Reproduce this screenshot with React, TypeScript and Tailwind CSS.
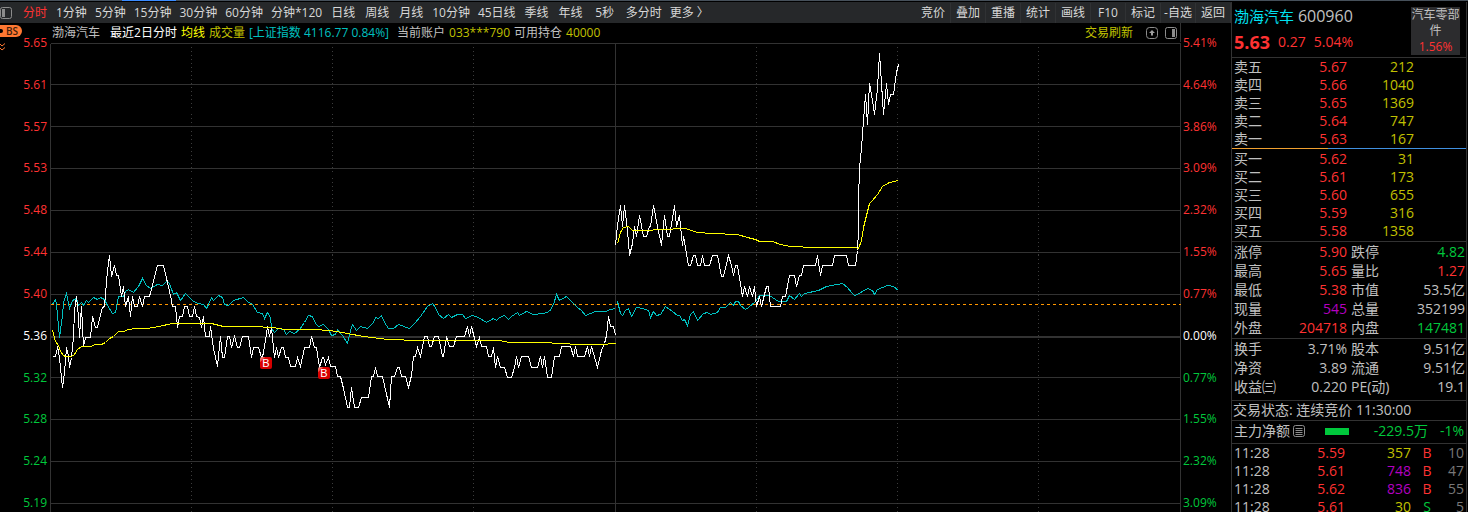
import { clsx } from "clsx";

const RED = "text-[#ff3232]";
const GREEN = "text-[#00c83c]";
const YELLOW = "text-[#c0c000]";
const PURPLE = "text-[#b400c0]";
const SILVER = "text-[#c0c0c0]";

const periods = [
  "分时", "1分钟", "5分钟", "15分钟", "30分钟", "60分钟", "分钟*120", "日线", "周线",
  "月线", "10分钟", "45日线", "季线", "年线", "5秒", "多分时", "更多 〉",
];

const actions = ["竞价", "叠加", "重播", "统计", "画线", "F10", "标记", "-自选", "返回"];

const prices = [
  "5.65", "5.61", "5.57", "5.53", "5.48", "5.44", "5.40", "5.36", "5.32", "5.28", "5.24", "5.19",
];

const percents = [
  "5.41%", "4.64%", "3.86%", "3.09%", "2.32%", "1.55%", "0.77%", "0.00%", "0.77%", "1.55%", "2.32%", "3.09%",
];

const sells = [
  ["卖五", "5.67", "212"],
  ["卖四", "5.66", "1040"],
  ["卖三", "5.65", "1369"],
  ["卖二", "5.64", "747"],
  ["卖一", "5.63", "167"],
];

const buys = [
  ["买一", "5.62", "31"],
  ["买二", "5.61", "173"],
  ["买三", "5.60", "655"],
  ["买四", "5.59", "316"],
  ["买五", "5.58", "1358"],
];

const quoteStats = [
  ["涨停", "5.90", RED, "跌停", "4.82", GREEN],
  ["最高", "5.65", RED, "量比", "1.27", RED],
  ["最低", "5.38", RED, "市值", "53.5亿", SILVER],
  ["现量", "545", PURPLE, "总量", "352199", SILVER],
  ["外盘", "204718", RED, "内盘", "147481", GREEN],
];

const companyStats = [
  ["换手", "3.71%", SILVER, "股本", "9.51亿", SILVER],
  ["净资", "3.89", SILVER, "流通", "9.51亿", SILVER],
  ["收益㈢", "0.220", SILVER, "PE(动)", "19.1", SILVER],
];

const ticks = [
  { time: "11:28", price: "5.59", volume: "357", color: YELLOW, side: "B", count: "10" },
  { time: "11:28", price: "5.61", volume: "748", color: PURPLE, side: "B", count: "47" },
  { time: "11:28", price: "5.62", volume: "836", color: PURPLE, side: "B", count: "55" },
  { time: "11:28", price: "5.61", volume: "30", color: YELLOW, side: "S", count: "5" },
];

// chart space: x 50..1181, y 42..512
const CHART = { x: 50, y: 42, w: 1131, h: 470 };
const gridY = [43, 84, 126, 168, 210, 252, 294, 377, 419, 461, 503];
const gridX = [191, 332, 473, 756, 897, 1038];

const priceDay1 =
  "52,356 55,356 57,347 58,350 60,367 62,387 64,372 66,347 68,355 69,367 71,357 73,337 74,310 76,296 78,317 79,337 80,320 81,306 83,346 85,337 90,337 92,316 95,327 97,327 102,307 104,306 107,270 109,255 111,276 114,265 116,275 118,275 121,296 123,286 125,306 128,296 130,316 132,296 134,306 137,306 139,296 142,306 144,296 149,296 157,265 163,265 167,282 171,300 172,306 175,306 177,327 179,316 182,316 184,306 187,306 189,316 192,316 194,306 196,316 199,317 201,327 203,316 205,336 209,336 210,326 213,348 215,357 217,366 220,336 222,357 224,357 227,336 229,336 231,347 234,336 237,347 239,347 242,336 248,336 251,357 253,347 258,347 261,357 262,357 265,340 267,326 269,336 271,327 274,357 276,347 278,357 281,347 283,347 285,357 288,357 290,366 295,366 297,357 300,366 304,347 309,347 311,336 314,347 316,347 319,367 322,357 323,357 325,364 328,357 330,366 335,366 337,376 340,376 343,388 347,407 349,407 351,387 354,407 358,407 361,397 368,397 371,376 373,376 375,367 377,376 382,376 389,407 391,376 394,376 397,367 399,367 401,376 405,376 408,387 411,375 413,356 415,356 417,347 420,356 424,336 427,336 429,346 431,346 434,336 438,336 442,356 443,356 446,336 449,346 453,346 456,336 464,336 467,326 469,336 471,326 476,346 479,337 481,346 486,346 488,356 491,356 493,347 495,367 497,356 500,367 504,367 507,377 511,377 514,367 516,356 518,367 521,356 528,356 531,367 537,367 540,356 542,367 544,356 547,377 551,377 554,356 559,356 561,346 570,346 573,356 575,346 577,356 584,356 587,346 589,356 591,346 597,367 601,350 604,343 606,335 608,316 610,326 613,326 615,335";

const priceDay2 =
  "615,245 617,225 620,205 622,226 624,205 627,230 629,255 632,243 634,226 636,236 639,215 643,236 646,236 649,226 650,226 653,205 657,226 661,245 664,215 667,236 669,236 674,205 676,226 679,215 682,245 683,236 688,265 690,265 693,255 695,255 697,265 700,265 702,255 704,265 709,265 712,255 717,255 721,276 723,276 728,255 731,265 733,275 735,265 737,265 742,296 744,286 747,296 749,286 752,296 754,286 756,306 759,296 761,306 766,286 768,286 770,306 780,306 782,296 785,296 789,275 794,275 796,286 799,275 801,275 803,265 815,265 817,255 820,275 822,265 832,265 834,255 846,255 848,265 855,265 857,250 858,230 858,200 859,168 861,148 863,120 865,94 867,124 869,83 872,100 874,114 877,88 879,53 881,83 883,114 886,83 888,104 890,94 893,94 896,72 898,64";

const averageDay1 =
  "52,330 55,341 58,345 60,351 63,355 65,356 71,356 74,354 77,349 81,346 90,346 95,344 101,344 105,342 109,338 113,336 118,331 123,331 128,329 135,328 147,328 158,326 172,323 211,323 223,326 252,326 272,327 285,329 312,329 330,330 347,333 363,336 387,339 420,340 499,340 509,342 542,342 579,344 607,344 608,343 615,343";

const averageDay2 =
  "617,243 620,232 623,227 628,226 632,230 652,230 653,229 672,229 673,228 685,228 697,232 712,233 737,234 747,237 755,239 759,241 772,241 780,244 790,246 815,247 855,247 858,248 861,240 863,227 867,211 869,203 872,200 877,194 882,186 889,182 898,180";

const indexDay1 =
  "52,304 55,299 56,303 57,315 59,337 62,315 63,302 66,293 69,308 72,300 76,298 78,305 81,302 83,305 86,300 88,302 93,297 97,299 100,297 104,299 107,305 112,313 115,312 118,296 123,296 125,291 128,289 133,292 138,286 142,278 146,285 150,288 157,284 162,285 166,281 169,283 173,294 176,292 180,300 185,293 192,300 197,303 203,304 206,308 208,304 211,297 213,300 218,295 222,297 224,304 228,305 233,300 243,297 247,301 252,304 257,312 262,313 264,318 267,312 270,317 271,328 274,332 278,328 283,329 286,334 289,331 294,333 299,329 304,322 308,315 312,316 315,323 318,326 323,324 328,329 331,335 335,334 337,329 342,335 347,343 350,330 352,324 356,330 360,326 367,328 373,322 375,317 378,318 381,315 384,322 388,328 393,328 398,324 409,328 414,323 420,316 427,306 432,303 435,307 438,314 443,318 448,314 451,317 457,314 462,314 465,318 472,315 478,317 486,322 493,318 496,320 499,317 504,315 508,319 511,316 517,312 519,315 526,311 533,314 543,313 549,311 553,304 556,294 559,300 566,296 570,300 574,304 577,307 581,310 585,315 595,311 605,311 610,309 615,308";

const indexDay2 =
  "617,301 620,313 622,315 625,310 628,308 631,316 636,307 642,308 648,310 650,317 653,311 656,315 660,314 665,306 672,311 677,315 679,315 682,320 684,319 687,325 690,314 693,311 697,320 703,313 707,312 710,314 717,312 720,307 725,307 730,302 733,305 735,301 738,301 740,305 745,309 748,307 755,301 759,295 769,295 775,299 778,301 786,301 789,295 794,299 799,293 801,296 804,293 818,290 826,286 842,283 847,287 851,292 854,295 857,294 867,288 872,290 874,294 877,289 887,285 893,286 898,290";

const trades = [
  { x: 260, y: 357 },
  { x: 318, y: 367 },
];

function axisColor(i: number) {
  if (i === 7) return "text-white";
  return i < 7 ? RED : GREEN;
}

function PanelIcon({ side }: { side: "left" | "right" }) {
  return (
    <svg width="12" height="12" viewBox="0 0 12 12" fill="none" className="shrink-0">
      <rect x="0.5" y="0.5" width="11" height="11" rx="2" stroke="#8c8c8c" />
      <rect x={side === "left" ? 2 : 7} y="2" width="3" height="8" fill="#8c8c8c" />
    </svg>
  );
}

function Toolbar() {
  return (
    <nav className="flex h-[21px] shrink-0 items-center justify-between overflow-hidden bg-[#26282a] text-xs leading-5 whitespace-nowrap text-[#d8d8d8]">
      <div className="flex items-center">
        <button type="button" aria-label="侧栏" className="mr-1.5">
          <PanelIcon side="left" />
        </button>
        {periods.map((p, i) => (
          <button
            key={p}
            type="button"
            className={clsx("min-w-[34px] px-1 text-center", i === 0 && RED)}
          >
            {p}
          </button>
        ))}
      </div>
      <div className="flex items-center">
        {actions.map((a) => (
          <button
            key={a}
            type="button"
            className="min-w-[35px] border-r border-[#303234] px-[3px] text-center"
          >
            {a}
          </button>
        ))}
      </div>
    </nav>
  );
}

function ChartHeader() {
  return (
    <div className="flex h-[19px] shrink-0 items-center justify-between overflow-hidden border-r border-[#323232] text-xs leading-5 whitespace-nowrap">
      <div className="flex gap-1 pl-0.5">
        <span className={clsx("mr-1.5", SILVER)}>渤海汽车</span>
        <span className="text-white">最近2日分时</span>
        <span className="text-[#ffff00]">均线</span>
        <span className={YELLOW}>成交量</span>
        <span className="text-[#00c0c0]">[上证指数 4116.77 0.84%]</span>
        <span className={clsx("ml-1", SILVER)}>当前账户</span>
        <span className={YELLOW}>033***790</span>
        <span className={SILVER}>可用持仓</span>
        <span className={YELLOW}>40000</span>
      </div>
      <div className="flex items-center pr-[3px]">
        <button type="button" className={clsx("mr-[13px]", YELLOW)}>
          交易刷新
        </button>
        <button type="button" aria-label="上移" className="mr-[7px]">
          <svg width="12" height="12" viewBox="0 0 12 12" fill="none">
            <rect x="0.5" y="0.5" width="11" height="11" rx="3" stroke="#8c8c8c" />
            <path d="M6 3 9 6H7v2.500H5V6H3z" fill="#a0a0a0" />
          </svg>
        </button>
        <button type="button" aria-label="右侧栏">
          <PanelIcon side="right" />
        </button>
      </div>
    </div>
  );
}

function Line({ points, color }: { points: string; color: string }) {
  return <polyline points={points} fill="none" stroke={color} vectorEffect="non-scaling-stroke" />;
}

function Chart() {
  return (
    <div className="relative min-h-0 flex-1">
      <svg
        className="absolute inset-0 h-full w-full"
        viewBox={`${CHART.x} ${CHART.y} ${CHART.w} ${CHART.h}`}
        preserveAspectRatio="none"
        shapeRendering="crispEdges"
      >
        <g transform="translate(0.5 0.5)">
          {gridY.map((y) => (
            <line key={y} x1="50" x2="1180" y1={y} y2={y} stroke="#323232" />
          ))}
          {gridX.map((x) => (
            <line key={x} x1={x} x2={x} y1="46" y2="512" stroke="#3c3c3c" strokeDasharray="1 3" />
          ))}
          <rect x="49.5" y="335.5" width="1130" height="2" fill="#323232" />
          <line x1="50" x2="50" y1="43" y2="512" stroke="#323232" />
          <line x1="615" x2="615" y1="43" y2="512" stroke="#323232" />
          <line x1="1180" x2="1180" y1="42" y2="512" stroke="#323232" />
          <line x1="50.5" x2="1180" y1="304" y2="304" stroke="#ff9600" strokeDasharray="3 3" />
          <Line points={indexDay1} color="#00c0c0" />
          <Line points={indexDay2} color="#00c0c0" />
          <Line points={priceDay1} color="#ffffff" />
          <Line points={priceDay2} color="#ffffff" />
          <Line points={averageDay1} color="#ffff00" />
          <Line points={averageDay2} color="#ffff00" />
        </g>
      </svg>
      {trades.map((t) => (
        <span
          key={t.x}
          className="absolute h-3 w-3 rounded-[2px] bg-linear-to-br from-[#f0b0b0] via-[#e00000] via-25% to-[#d00000] text-center font-['Liberation_Sans'] text-[11px] leading-3 text-white"
          style={{
            left: `${((t.x - CHART.x) / CHART.w) * 100}%`,
            top: `${((t.y - CHART.y) / CHART.h) * 100}%`,
          }}
        >
          B
        </span>
      ))}
    </div>
  );
}

function BookRows({ rows }: { rows: string[][] }) {
  return (
    <table className="w-full table-fixed">
      <tbody>
        {rows.map(([label, price, volume]) => (
          <tr key={label} className="h-[18px]">
            <th className="w-[45px] pl-0.5 text-left font-normal">{label}</th>
            <td className={clsx("w-[70px] text-right", RED)}>{price}</td>
            <td className={clsx("w-[67px] text-right", YELLOW)}>{volume}</td>
            <td />
          </tr>
        ))}
      </tbody>
    </table>
  );
}

function StatRows({ rows }: { rows: string[][] }) {
  return (
    <table className="w-full table-fixed whitespace-nowrap">
      <tbody>
        {rows.map(([a, av, ac, b, bv, bc]) => (
          <tr key={a} className="h-[19px]">
            <th className="w-[45px] pl-0.5 text-left font-normal">{a}</th>
            <td className={clsx("w-[70px] text-right", ac)}>{av}</td>
            <th className="w-[47px] pl-1 text-left font-normal">{b}</th>
            <td className={clsx("pr-px text-right", bc)}>{bv}</td>
          </tr>
        ))}
      </tbody>
    </table>
  );
}

function QuotePanel() {
  return (
    <aside className="mr-px w-[236px] shrink-0 overflow-hidden border-x border-[#323232] text-sm leading-[18px] text-[#c0c0c0]">
      <header className="flex h-14 justify-between border-b border-[#323232] pr-1.5 pl-0.5">
        <div className="pt-1">
          <h1 className="text-[15px] leading-5">
            <span className="text-[#00e0f0]">渤海汽车</span> <span className="text-base leading-5">600960</span>
          </h1>
          <p className={clsx("flex items-center gap-2 pt-1 leading-6", RED)}>
            <b className="text-lg leading-6">5.63</b>
            <span>0.27</span>
            <span>5.04%</span>
          </p>
        </div>
        <a
          href="#sector"
          className="mt-[5px] h-12 w-[49px] bg-[#2c2c2e] text-center text-xs leading-4 break-all"
        >
          汽车零部件
          <span className={clsx("block", RED)}>1.56%</span>
        </a>
      </header>

      <BookRows rows={sells} />
      <div className="flex h-px">
        <div className="w-[41%] bg-[#f0a030]" />
        <div className="flex-1 bg-[#4090e0]" />
      </div>
      <div className="border-b border-[#323232] pt-px pb-px">
        <BookRows rows={buys} />
      </div>
      <div className="border-b border-[#323232] pb-px">
        <StatRows rows={quoteStats} />
      </div>
      <div className="border-b border-[#323232] pb-1">
        <StatRows rows={companyStats} />
      </div>
      <p className="h-5 border-b border-[#323232] pl-px">交易状态: 连续竞价 11:30:00</p>
      <div className="flex h-[23px] items-center border-b border-[#323232] pr-0.5 pb-0.5 pl-0.5 whitespace-nowrap">
        <span>主力净额</span>
        <svg width="12" height="12" viewBox="0 0 12 12" fill="none" stroke="#8c8c8c" className="ml-[3px]">
          <rect x="0.5" y="0.5" width="11" height="11" rx="2" />
          <path d="M2.5 3.5h7M2.5 5.5h7M2.5 7.5h7M2.5 9.5h7" />
        </svg>
        <span className="ml-5 h-[7px] w-6 bg-[#00c83c]" />
        <span className={clsx("flex-1 pr-3 text-right", GREEN)}>-229.5万</span>
        <span className={GREEN}>-1%</span>
      </div>
      <table className="w-full table-fixed">
        <tbody>
          {ticks.map((t, i) => (
            <tr key={i} className="h-[18px]">
              <td className="w-[45px] pl-0.5">{t.time}</td>
              <td className={clsx("w-[68px] text-right", RED)}>{t.price}</td>
              <td className={clsx("w-[66px] text-right", t.color)}>{t.volume}</td>
              <td className={clsx("w-8 text-center", t.side === "B" ? RED : GREEN)}>{t.side}</td>
              <td className="pr-0.5 text-right text-[#787878]">{t.count}</td>
            </tr>
          ))}
        </tbody>
      </table>
    </aside>
  );
}

export default function App() {
  return (
    <div className="flex h-screen flex-col overflow-hidden bg-black font-['Open_Sans','Noto_Sans_CJK_SC',sans-serif]">
      <div className="mb-px h-px shrink-0 bg-[#46505a]">
        <div className="ml-[122px] h-px w-[54px] bg-[#3c8cff]" />
      </div>
      <div className="flex min-h-0 flex-1">
        <main className="flex min-w-0 flex-1 flex-col">
          <Toolbar />
          <div className="flex min-h-0 flex-1">
            <div className="relative flex w-[50px] shrink-0 flex-col justify-between pt-3 pr-[3px] pb-px text-right text-xs">
              <button
                type="button"
                className="absolute top-0.5 left-0 flex h-3 w-[22px] items-center justify-end rounded-r-md bg-[#ff7832] pr-1 text-[10px] leading-3 font-semibold text-[#40200c]"
              >
                <span className="absolute top-1 left-0 h-1 w-[3px] rounded-r-full bg-black" />
                BS
              </button>
              <svg
                width="6"
                height="8"
                viewBox="0 0 6 8"
                fill="none"
                stroke="#ff7832"
                className="absolute top-5 left-0"
              >
                <path d="M0 1l2 2 3-2.500M0 5l2 2 3-2.500" />
              </svg>
              {prices.map((p, i) => (
                <span key={i} className={axisColor(i)}>
                  {p}
                </span>
              ))}
            </div>
            <div className="flex min-w-0 flex-1 flex-col">
              <ChartHeader />
              <Chart />
            </div>
            <div className="flex w-[50px] shrink-0 flex-col justify-between pt-3 pb-px pl-0.5 text-xs">
              {percents.map((p, i) => (
                <span key={i} className={axisColor(i)}>
                  {p}
                </span>
              ))}
            </div>
          </div>
        </main>
        <QuotePanel />
      </div>
    </div>
  );
}
